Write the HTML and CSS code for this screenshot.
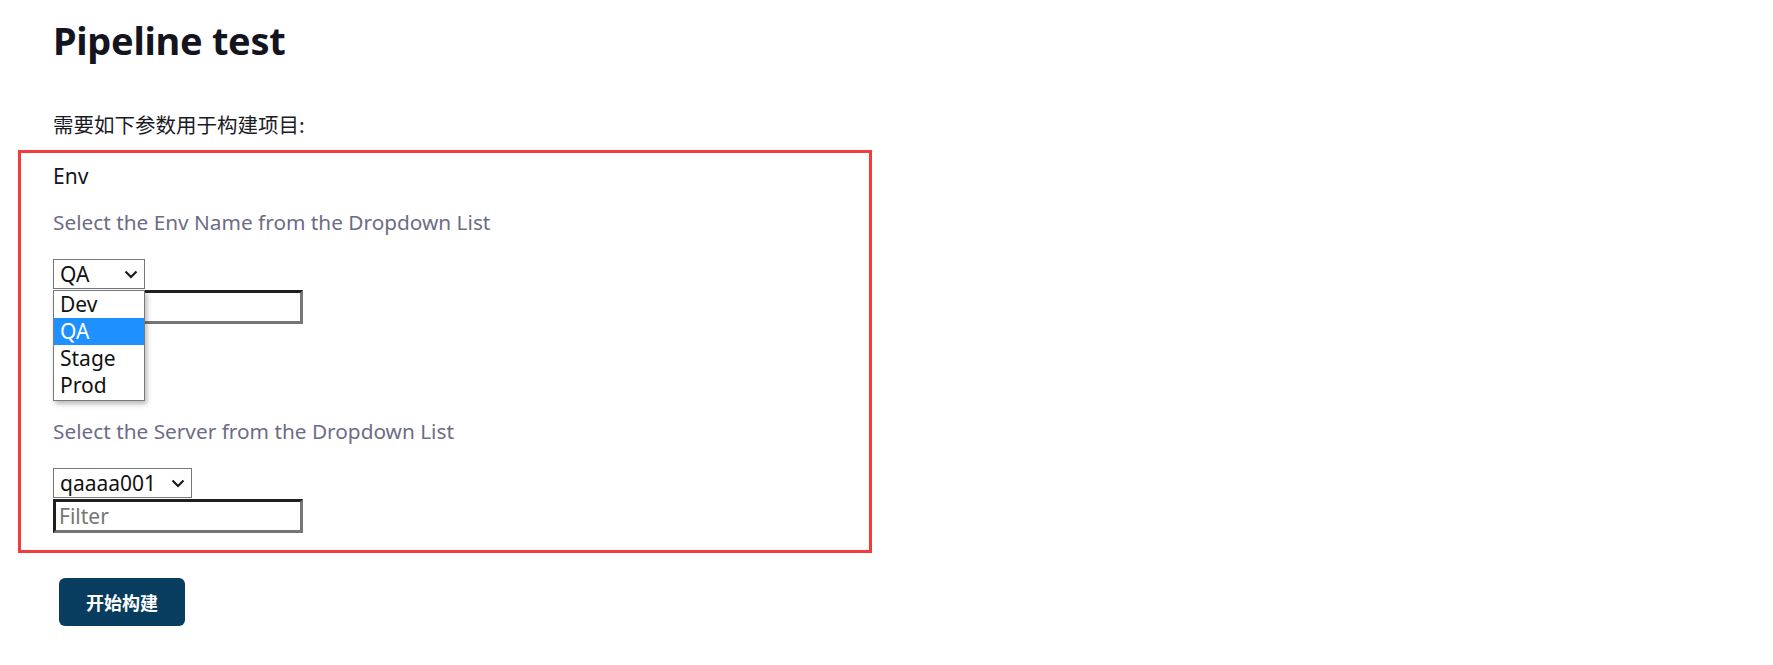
FILE: index.html
```html
<!DOCTYPE html>
<html lang="zh-CN">
<head>
<meta charset="utf-8">
<title>Pipeline test</title>
<link rel="stylesheet" href="styles.css">
</head>
<body>
<div class="page">
  <header class="header">
    <h1 class="title">Pipeline test</h1>
    <p class="intro">需要如下参数用于构建项目:</p>
  </header>

  <form class="params">
    <div class="param">
      <div class="param-name">Env</div>
      <div class="param-desc">Select the Env Name from the Dropdown List</div>
      <div class="select-wrap">
        <div class="select select-env">
          <span class="select-value">QA</span>
          <svg class="chevron" width="14" height="9" viewBox="0 0 14 9"><path d="M1.5 1.5 L7 7 L12.5 1.5" fill="none" stroke="#1a1a1a" stroke-width="2.2"/></svg>
        </div>
        <ul class="dropdown">
          <li class="option">Dev</li>
          <li class="option option-active">QA</li>
          <li class="option">Stage</li>
          <li class="option">Prod</li>
        </ul>
      </div>
      <div class="filter"></div>
    </div>

    <div class="param param-next">
      <div class="param-name param-name-covered" aria-hidden="true"></div>
      <div class="param-desc">Select the Server from the Dropdown List</div>
      <div class="select-wrap">
        <div class="select select-server">
          <span class="select-value">qaaaa001</span>
          <svg class="chevron" width="14" height="9" viewBox="0 0 14 9"><path d="M1.5 1.5 L7 7 L12.5 1.5" fill="none" stroke="#1a1a1a" stroke-width="2.2"/></svg>
        </div>
      </div>
      <div class="filter"><span class="placeholder">Filter</span></div>
    </div>
  </form>

  <div class="actions">
    <button class="build-btn" type="button">开始构建</button>
  </div>
</div>
</body>
</html>
```

FILE: styles.css
```css
* { box-sizing: border-box; }

html, body {
  margin: 0;
  padding: 0;
  background: #ffffff;
}

body {
  font-family: "Noto Sans", "Noto Sans CJK SC", sans-serif;
  color: #14141f;
}

.page {
  padding-left: 18px;
}

.header {
  padding-left: 35px;
}

.title {
  margin: 16px 0 0 0;
  font-size: 38px;
  line-height: 48px;
  font-weight: 700;
  color: #14141f;
  letter-spacing: -0.3px;
}

.intro {
  margin: 46px 0 0 0;
  font-family: "Noto Sans CJK SC", "Noto Sans", sans-serif;
  font-size: 20.5px;
  line-height: 28px;
  color: #1b1b26;
}

.params {
  margin: 12px 0 0 0;
  width: 854px;
  border: 3px solid #f43b3b;
  padding: 9px 0 17px 32px;
}

.param-next {
  margin-top: 47px;
}

.param-name {
  font-size: 21px;
  line-height: 28px;
  min-height: 28px;
  color: #14141f;
}

.param-desc {
  margin-top: 18px;
  font-size: 20.8px;
  line-height: 28px;
  color: #6d6c87;
}

.select-wrap {
  position: relative;
  margin-top: 23px;
  height: 30px;
}

.select {
  display: flex;
  align-items: center;
  justify-content: space-between;
  height: 30px;
  border: 1px solid #767676;
  background: #ffffff;
  padding: 0 6px 0 6px;
  font-size: 21px;
  color: #111111;
}

.select-env { width: 92px; }
.select-server { width: 139px; }

.select-value {
  line-height: 28px;
}

.chevron {
  display: block;
  flex: none;
}

.dropdown {
  position: absolute;
  top: 31px;
  left: 0;
  z-index: 10;
  width: 92px;
  margin: 0;
  padding: 0 0 1px 0;
  list-style: none;
  background: #ffffff;
  border: 1px solid #7a7a7a;
  box-shadow: 2px 3px 5px rgba(0, 0, 0, 0.28);
}

.option {
  height: 27px;
  padding-left: 6px;
  font-size: 21px;
  line-height: 27px;
  color: #111111;
}

.option-active {
  background: #1e90ff;
  color: #ffffff;
}

.filter {
  margin-top: 1px;
  width: 250px;
  height: 34px;
  border-style: solid;
  border-width: 3px;
  border-color: #1f1f1f #767676 #767676 #1f1f1f;
  background: #ffffff;
  padding-left: 3px;
  display: flex;
  align-items: center;
}

.placeholder {
  font-size: 21px;
  color: #757575;
  line-height: 28px;
}

.actions {
  padding-left: 41px;
  margin-top: 25px;
}

.build-btn {
  display: block;
  width: 126px;
  height: 48px;
  border: none;
  border-radius: 6px;
  background: #083d5f;
  color: #ffffff;
  font-family: "Noto Sans CJK SC", "Noto Sans", sans-serif;
  font-size: 18px;
  font-weight: 700;
  padding: 0;
  cursor: pointer;
}
```
